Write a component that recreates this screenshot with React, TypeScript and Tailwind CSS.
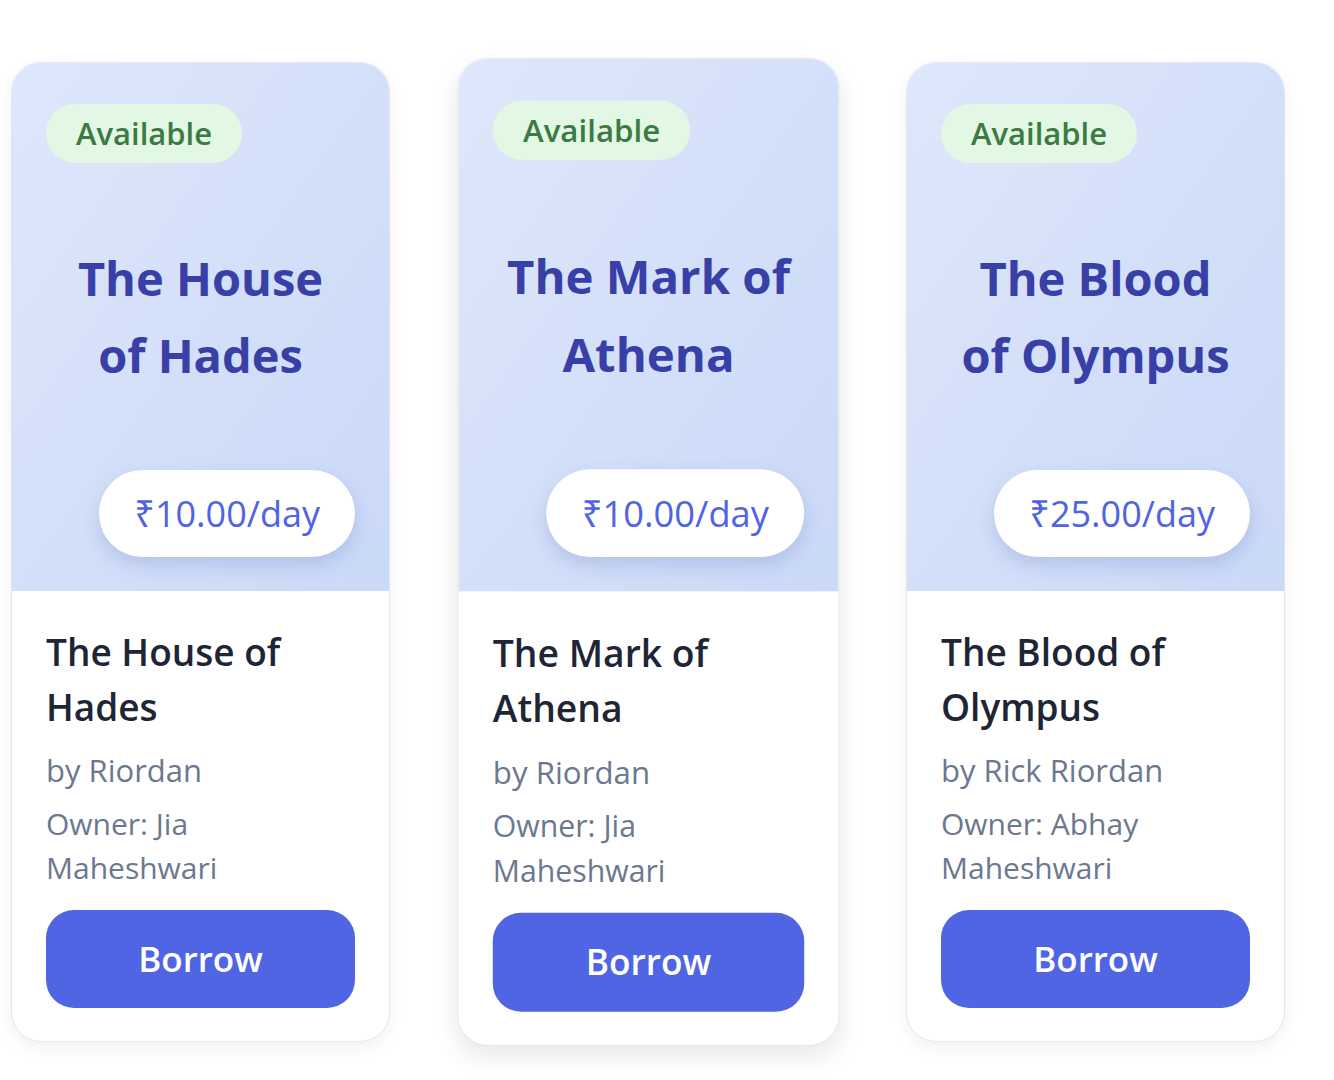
import React from 'react';

type Book = {
    title: string;
    author: string;
    owner: string;
    price: string;
};

const books: Book[] = [
    { title: 'The House of Hades', author: 'Riordan', owner: 'Jia Maheshwari', price: '10.00' },
    { title: 'The Mark of Athena', author: 'Riordan', owner: 'Jia Maheshwari', price: '10.00' },
    { title: 'The Blood of Olympus', author: 'Rick Riordan', owner: 'Abhay Maheshwari', price: '25.00' },
];

function BookCard({ book, active }: { book: Book; active?: boolean }) {
    return (
        <div
            className={
                active
                    ? 'w-[379px] shrink-0 overflow-hidden rounded-[30px] border border-[#e2e8f0] bg-white scale-[1.008] shadow-[0_10px_24px_rgba(15,23,42,0.10)]'
                    : 'w-[379px] shrink-0 overflow-hidden rounded-[30px] border border-[#e2e8f0] bg-white shadow-[0_6px_16px_rgba(15,23,42,0.06)]'
            }
        >
            <div className="flex h-[528px] flex-col bg-gradient-to-br from-[#dee7fb] to-[#cad9f7] px-[34px] pt-[41px] pb-[34px]">
                <span className="self-start rounded-full bg-[#e2f7e4] px-[30px] text-[31px] leading-[59px] font-semibold text-[#3b7a43]">
                    Available
                </span>
                <div className="flex flex-1 items-center justify-center">
                    <h2 className="max-w-[288px] text-center text-[47px] leading-[77px] font-bold text-[#383fa6]">
                        {book.title}
                    </h2>
                </div>
                <span className="self-end rounded-full bg-white px-[35px] text-[36px] leading-[87px] text-[#4f63e3] shadow-[0_8px_18px_rgba(79,99,180,0.22)]">
                    ₹{book.price}/day
                </span>
            </div>
            <div className="px-[34px] pt-[33px] pb-[33px]">
                <h3 className="text-[37px] leading-[55px] font-semibold text-[#1e2535]">
                    {book.title}
                </h3>
                <p className="mt-[14px] text-[31px] leading-[44px] text-[#6b7890]">
                    by {book.author}
                </p>
                <p className="mt-[10px] text-[30px] leading-[44px] text-[#6b7890]">
                    Owner: {book.owner}
                </p>
                <button className="mt-[20px] h-[98px] w-full rounded-[28px] bg-[#4f65e3] text-[35px] font-semibold text-white">
                    Borrow
                </button>
            </div>
        </div>
    );
}

export default function App() {
    return (
        <div
            className="min-h-screen bg-white pt-[62px] pl-[11px]"
            style={{ fontFamily: '"Open Sans", "Noto Sans", sans-serif' }}
        >
            <div className="flex items-start gap-[68.5px]">
                {books.map((book, i) => (
                    <BookCard key={book.title} book={book} active={i === 1} />
                ))}
            </div>
        </div>
    );
}
